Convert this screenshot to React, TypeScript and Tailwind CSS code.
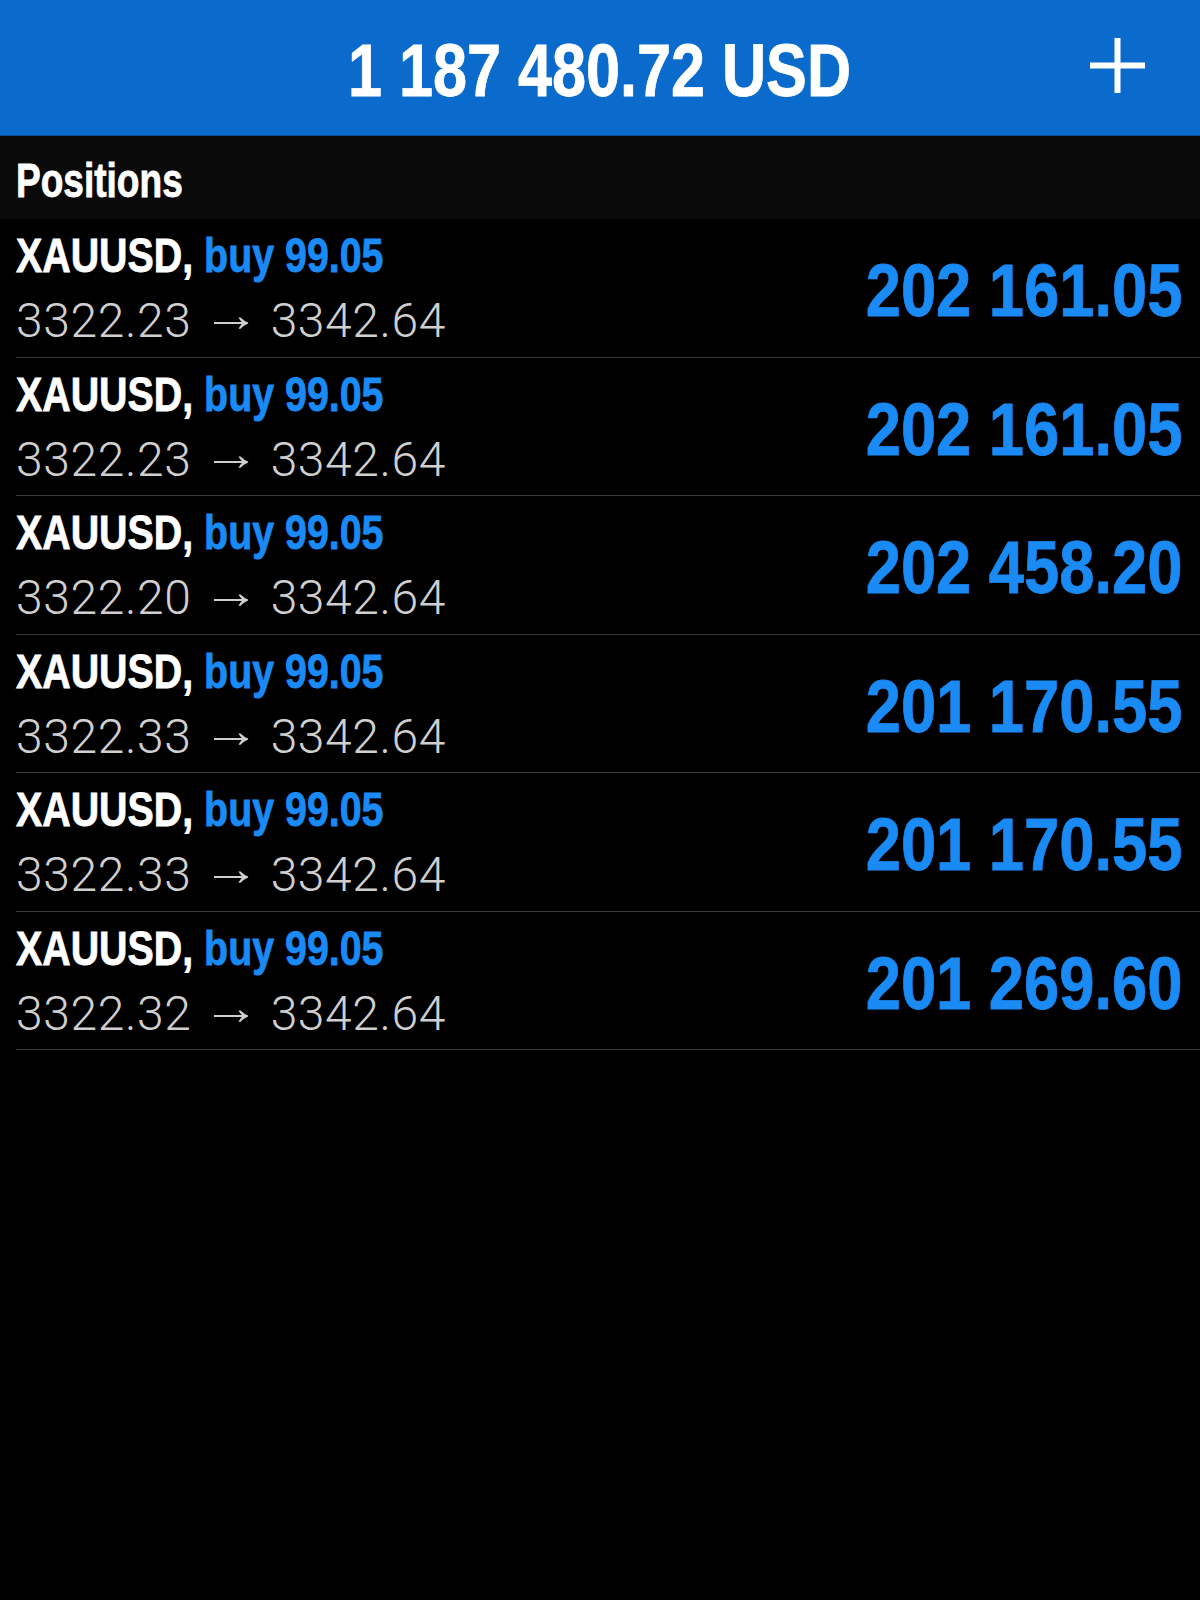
import React from 'react';

type Position = {
  symbol: string;
  side: string;
  volume: string;
  open: string;
  current: string;
  profit: string;
};

const positions: Position[] = [
  { symbol: 'XAUUSD', side: 'buy', volume: '99.05', open: '3322.23', current: '3342.64', profit: '202 161.05' },
  { symbol: 'XAUUSD', side: 'buy', volume: '99.05', open: '3322.23', current: '3342.64', profit: '202 161.05' },
  { symbol: 'XAUUSD', side: 'buy', volume: '99.05', open: '3322.20', current: '3342.64', profit: '202 458.20' },
  { symbol: 'XAUUSD', side: 'buy', volume: '99.05', open: '3322.33', current: '3342.64', profit: '201 170.55' },
  { symbol: 'XAUUSD', side: 'buy', volume: '99.05', open: '3322.33', current: '3342.64', profit: '201 170.55' },
  { symbol: 'XAUUSD', side: 'buy', volume: '99.05', open: '3322.32', current: '3342.64', profit: '201 269.60' },
];

// condensed heavy look: Arial metrics squeezed horizontally, a hair of stroke for weight
const bold = "font-['Liberation_Sans',Arial,sans-serif] font-bold [-webkit-text-stroke:0.8px_currentColor]";

const PositionRow: React.FC<{ p: Position }> = ({ p }) => (
  <div className="ml-4 flex h-[138.5px] items-start justify-between border-b border-[#3a3a3a] pr-[18px]">
    <div className="flex flex-col pt-[7px]">
      <div className="h-[60px] leading-[60px]">
        <span className={`${bold} inline-block origin-left scale-x-[0.82] whitespace-nowrap text-[48px]`}>
          <span className="text-white">{p.symbol},</span>{' '}
          <span className="text-[#1a8af5]">
            {p.side} {p.volume}
          </span>
        </span>
      </div>
      <div className="whitespace-nowrap font-['Roboto',sans-serif] text-[48px] font-light leading-[69px] tracking-[0.6px] text-[#cfcfcf]">
        {p.open}{' '}
        <span className="mx-[3px] inline-block -translate-y-[6px] scale-x-[1.2] font-['Liberation_Sans',sans-serif] font-normal">
          →
        </span>{' '}
        {p.current}
      </div>
    </div>
    <div
      className={`${bold} mt-[35px] inline-block origin-right scale-x-[0.855] whitespace-nowrap text-[74px] leading-none text-[#1a8af5]`}
    >
      {p.profit}
    </div>
  </div>
);

export default function App() {
  return (
    <div className="min-h-[1600px] w-[1200px] bg-black">
      {/* Balance header */}
      <header className="relative flex h-[136px] justify-center border-b border-[#0b4f98] bg-[#0a6bcc] pt-[33px]">
        <h1
          className={`${bold} inline-block origin-center scale-x-[0.815] whitespace-nowrap text-[75px] leading-none text-white`}
        >
          1 187 480.72 USD
        </h1>
        <button className="absolute right-[55px] top-[38px] h-[55px] w-[55px]" aria-label="Add">
          <svg viewBox="0 0 55 55" className="h-full w-full">
            <path d="M27.5 0v55M0 27.5h55" stroke="white" strokeWidth="6" />
          </svg>
        </button>
      </header>

      {/* Section title */}
      <div className="h-[83px] bg-[#0a0a0a] px-4 pt-[21px]">
        <span
          className={`${bold} inline-block origin-left scale-x-[0.78] text-[47.5px] leading-none text-white`}
        >
          Positions
        </span>
      </div>

      {/* Positions list */}
      <div>
        {positions.map((p, i) => (
          <PositionRow key={i} p={p} />
        ))}
      </div>
    </div>
  );
}
